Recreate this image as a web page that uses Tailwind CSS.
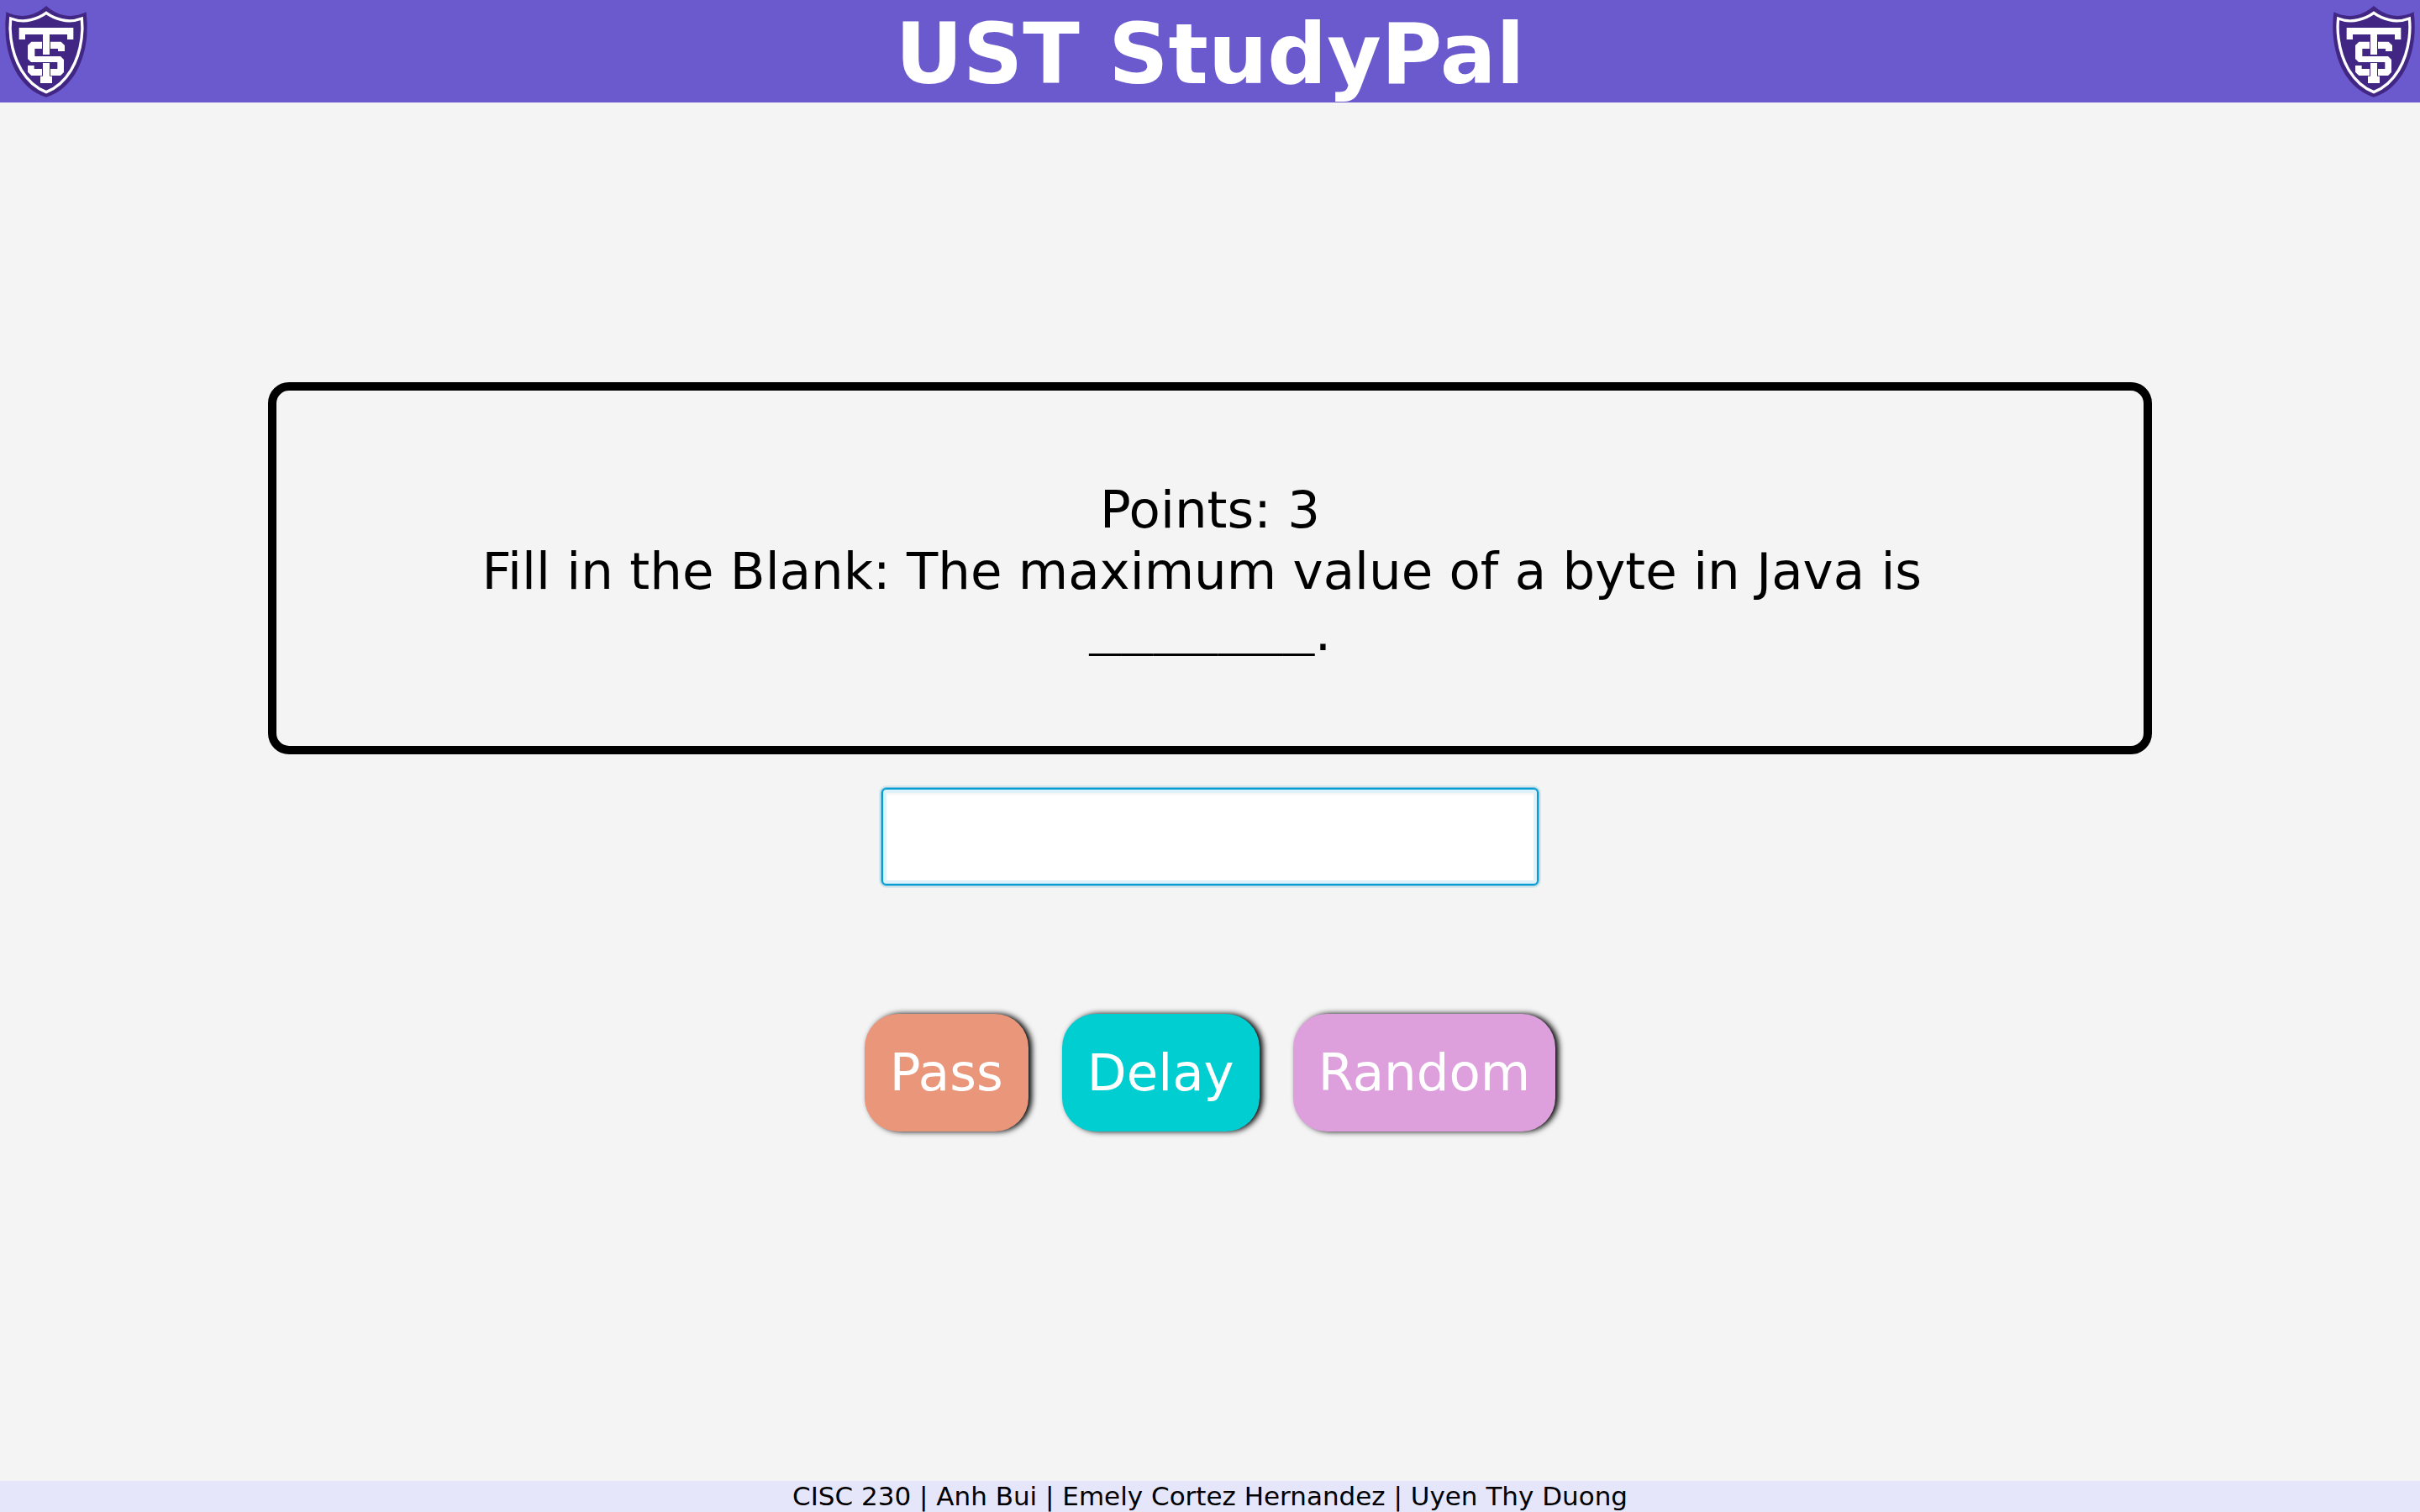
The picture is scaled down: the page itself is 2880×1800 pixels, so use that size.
<!DOCTYPE html>
<html lang="en">
<head>
<meta charset="utf-8">
<meta name="viewport" content="width=device-width, initial-scale=1">
<title>UST StudyPal</title>
<script src="https://cdn.jsdelivr.net/npm/@tailwindcss/browser@4"></script>
</head>
<body class="flex min-h-screen flex-col bg-[#f4f4f4] font-['DejaVu_Sans',sans-serif] text-black">
  <svg class="hidden" aria-hidden="true">
    <symbol id="shield" viewBox="0 0 330 366">
      <path fill="#412684" d="M22 43 Q62 62 100 55 Q135 48 165 21 Q195 48 230 55 Q268 62 308 43 Q313 85 310 125 C304 210 265 315 165 347 C65 315 26 210 20 125 Q17 85 22 43Z"/>
      <path fill="none" stroke="#fff" stroke-width="10" d="M38 66 Q75 80 110 71 Q142 63 165 46 Q188 63 220 71 Q255 80 292 66 Q296 100 291 138 C281 215 243 298 165 329 C87 298 49 215 39 138 Q34 100 38 66Z"/>
      <path fill="#fff" d="M68 99H262V141H240V123H177V195H153V123H90V141H68Z"/>
      <path fill="#fff" d="M112 149H150V174H124V201H216L228 213V258L216 270H180V246H205V222H111L99 210V162ZM180 149H218L231 162V183H207V174H180ZM99 234H122V246H150V270H112L99 257Z"/>
      <path fill="#fff" d="M153 225H177V272H186V297H144V272H153Z"/>
    </symbol>
  </svg>

  <header class="flex h-[122px] items-center justify-between bg-[#6a5acd]">
    <svg class="h-[122px] w-[110px]" role="img" aria-label="St. Thomas shield"><use href="#shield"/></svg>
    <h1 class="pt-2 text-[99px] leading-[122px] font-bold text-white">UST StudyPal</h1>
    <svg class="h-[122px] w-[110px]" role="img" aria-label="St. Thomas shield"><use href="#shield"/></svg>
  </header>

  <main class="flex grow flex-col items-center justify-center px-[319px] pb-[83px]">
    <section class="w-full rounded-[25px] border-10 border-black px-[200px] pt-[105px] pb-[99px] text-center text-[61px] leading-[73px]">
      <p>Points: 3</p>
      <label for="answer" class="block">Fill in the Blank: The maximum value of a byte in Java is&nbsp;<br><span class="font-['Liberation_Mono',monospace] text-[64px] leading-[0]">_______</span>.</label>
    </section>
    <input id="answer" type="text" class="mt-10 h-[116px] w-[782px] rounded-[6px] border-2 border-[#039ed3] bg-white px-6 text-[61px] shadow-[0_0_0_1px_#7fbfd8,0_0_0_3px_#d5e8ef,inset_0_0_0_4px_#ddf2f9,inset_0_6px_3px_#f4f4f4] outline-none">
    <div class="mt-[153px] flex gap-10 text-[61px] leading-[72px] text-white">
      <button type="button" class="rounded-[40px] bg-[#e9967a] px-[30px] py-[34px] shadow-[4px_0_7px_#000]">Pass</button>
      <button type="button" class="rounded-[40px] bg-[#00ced1] px-[30px] py-[34px] shadow-[4px_0_7px_#000]">Delay</button>
      <button type="button" class="rounded-[40px] bg-[#dda0dd] px-[30px] py-[34px] shadow-[4px_0_7px_#000]">Random</button>
    </div>
  </main>

  <footer class="bg-[#e6e6fa] text-center text-[31px] leading-[37px]">CISC 230 | Anh Bui | Emely Cortez Hernandez | Uyen Thy Duong</footer>
</body>
</html>
